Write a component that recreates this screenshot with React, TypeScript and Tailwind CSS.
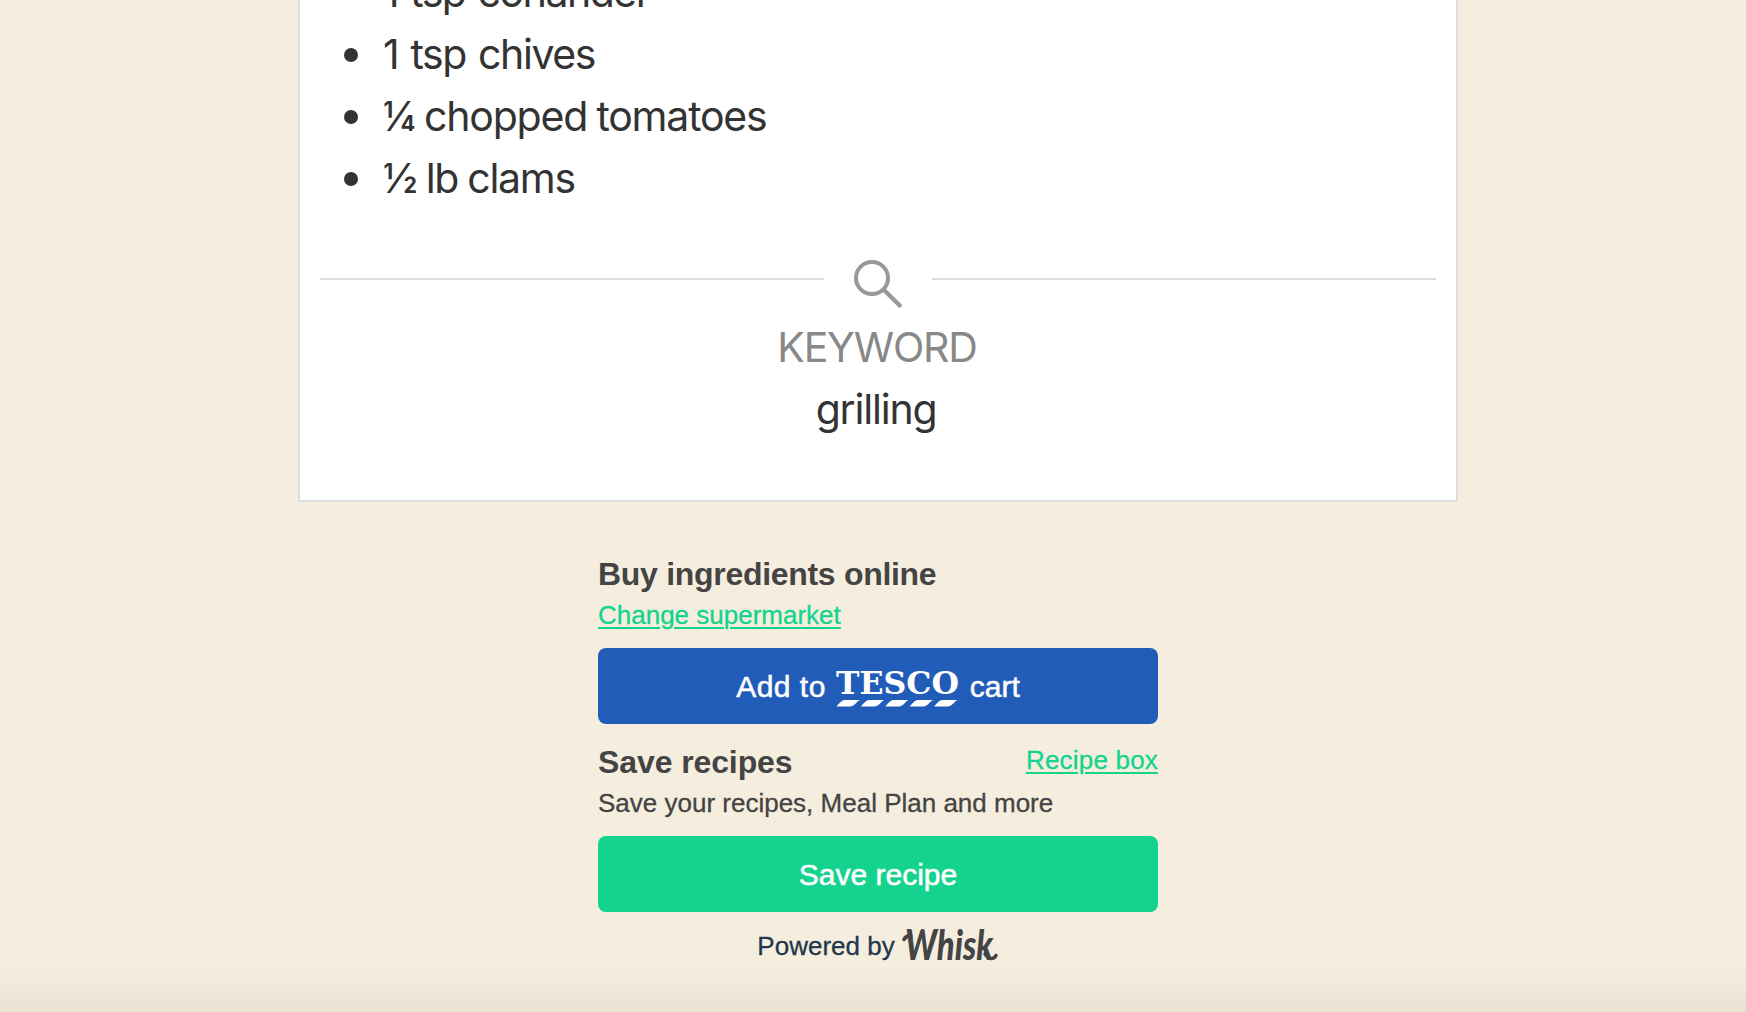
const ingredients = [
  { text: '1 tsp coriander', spacing: 'tracking-[-1.5px] [word-spacing:2px]' },
  { text: '1 tsp chives', spacing: 'tracking-[-1.4px] [word-spacing:2px]' },
  { text: '¼ chopped tomatoes', spacing: 'tracking-[-1.2px] [word-spacing:-1px]' },
  { text: '½ lb clams', spacing: 'tracking-[-1.3px] [word-spacing:-1px]' },
];

function SearchIcon() {
  return (
    <svg className="h-[50px] w-[50px]" viewBox="0 0 50 50" fill="none" stroke="#999" strokeLinecap="round">
      <circle cx="19" cy="19" r="16" strokeWidth="4" />
      <path d="M30.500 30.500 46.700 46.500" strokeWidth="4.400" />
    </svg>
  );
}

function TescoLogo() {
  return (
    <svg className="h-[44px] w-[124px] overflow-visible" viewBox="0 -5 124 44" fill="#fff">
      <text x="0" y="25" fontFamily="DejaVu Serif, serif" fontWeight="700" fontSize="32" textLength="123" lengthAdjust="spacingAndGlyphs">
        TESCO
      </text>
      {[0, 24.4, 48.8, 73.2, 97.6].map((x) => (
        <path key={x} transform={`translate(${x} 0)`} d="M.5 37.500C4 33.500 6 31 9 31H24C21 31.500 19 37.500 14 37.500Z" />
      ))}
    </svg>
  );
}

function WhiskLogo() {
  return (
    <svg className="h-[50px] w-[98px] overflow-visible" viewBox="0 -6 98 50" fill="#444">
      <text x="4" y="33" fontFamily="Lato, sans-serif" fontStyle="italic" fontWeight="900" fontSize="42" textLength="88" lengthAdjust="spacingAndGlyphs">
        Whisk
      </text>
      <path d="M3 12.500C4.500 9.500 7 8.500 10 9M84 27C88 32.500 92.500 33 95 28.500" fill="none" stroke="#444" strokeWidth="3.600" strokeLinecap="round" />
    </svg>
  );
}

export default function App() {
  return (
    <div className="flex h-[1012px] flex-col items-center overflow-hidden bg-[#f5eede] bg-[linear-gradient(to_bottom,#f5eede_962px,#f2eadb_980px,#e9e2d2_1012px)] pl-[10px] font-['Liberation_Sans',Arial,sans-serif] text-[#444]">
      <main className="flex h-[502px] w-[1160px] shrink-0 flex-col border-2 border-t-0 border-[#dedede] bg-white px-5 font-[Inter,sans-serif] text-[41px] leading-[62px] text-[#333]">
        <ul className="-mt-[38px]">
          {ingredients.map((item) => (
            <li key={item.text} className="flex h-[62px] items-center pl-6">
              <span className="size-3.5 rounded-full bg-[#333]" />
              <span className={`mb-[3px] ml-[25px] whitespace-nowrap ${item.spacing}`}>{item.text}</span>
            </li>
          ))}
        </ul>
        <div className="mt-[49px] flex h-[50px] items-start">
          <div className="mt-[19px] h-0.5 flex-1 bg-[#dedede]" />
          <div className="flex w-[108px] justify-center">
            <SearchIcon />
          </div>
          <div className="mt-[19px] h-0.5 flex-1 bg-[#dedede]" />
        </div>
        <h3 className="mt-[7px] pr-0.5 text-center tracking-[-1.2px] text-[#888]">KEYWORD</h3>
        <p className="pr-1 text-center tracking-[-1.2px]">grilling</p>
      </main>

      <section className="mt-[53px] flex w-[560px] shrink-0 flex-col">
        <h2 className="h-[42px] pt-px text-[32px] leading-[36px] font-bold tracking-[-0.3px] whitespace-nowrap">Buy ingredients online</h2>
        <a className="h-[51px] self-start text-[26px] leading-[36px] text-[#13d38e] underline decoration-2 underline-offset-[3px] [-webkit-text-stroke:0.3px]">Change supermarket</a>
        <button className="flex h-[76px] items-center justify-center rounded-lg bg-[#215cb8] text-[30px] text-white [-webkit-text-stroke:0.5px]">
          <span className="tracking-[0.5px]">Add to</span>
          <span className="mx-[10px] [-webkit-text-stroke:0px]"><TescoLogo /></span>
          <span>cart</span>
        </button>
        <div className="mt-[19px] flex h-[42px] justify-between">
          <h2 className="pt-px text-[32px] leading-[36px] font-bold tracking-[-0.1px]">Save recipes</h2>
          <a className="text-[26px] leading-[34px] tracking-[0.2px] text-[#13d38e] underline decoration-2 underline-offset-[3px] [-webkit-text-stroke:0.3px]">Recipe box</a>
        </div>
        <p className="h-[51px] text-[26px] leading-[36px] whitespace-nowrap [-webkit-text-stroke:0.3px]">Save your recipes, Meal Plan and more</p>
        <button className="h-[76px] rounded-lg bg-[#13d38e] text-[30px] text-white [-webkit-text-stroke:0.5px]">Save recipe</button>
        <footer className="mt-[13px] flex h-[42px] items-center justify-center text-[26px] text-[#21374d] [-webkit-text-stroke:0.3px]">
          <span>Powered by</span>
          <span className="ml-1.5"><WhiskLogo /></span>
        </footer>
      </section>
    </div>
  );
}
